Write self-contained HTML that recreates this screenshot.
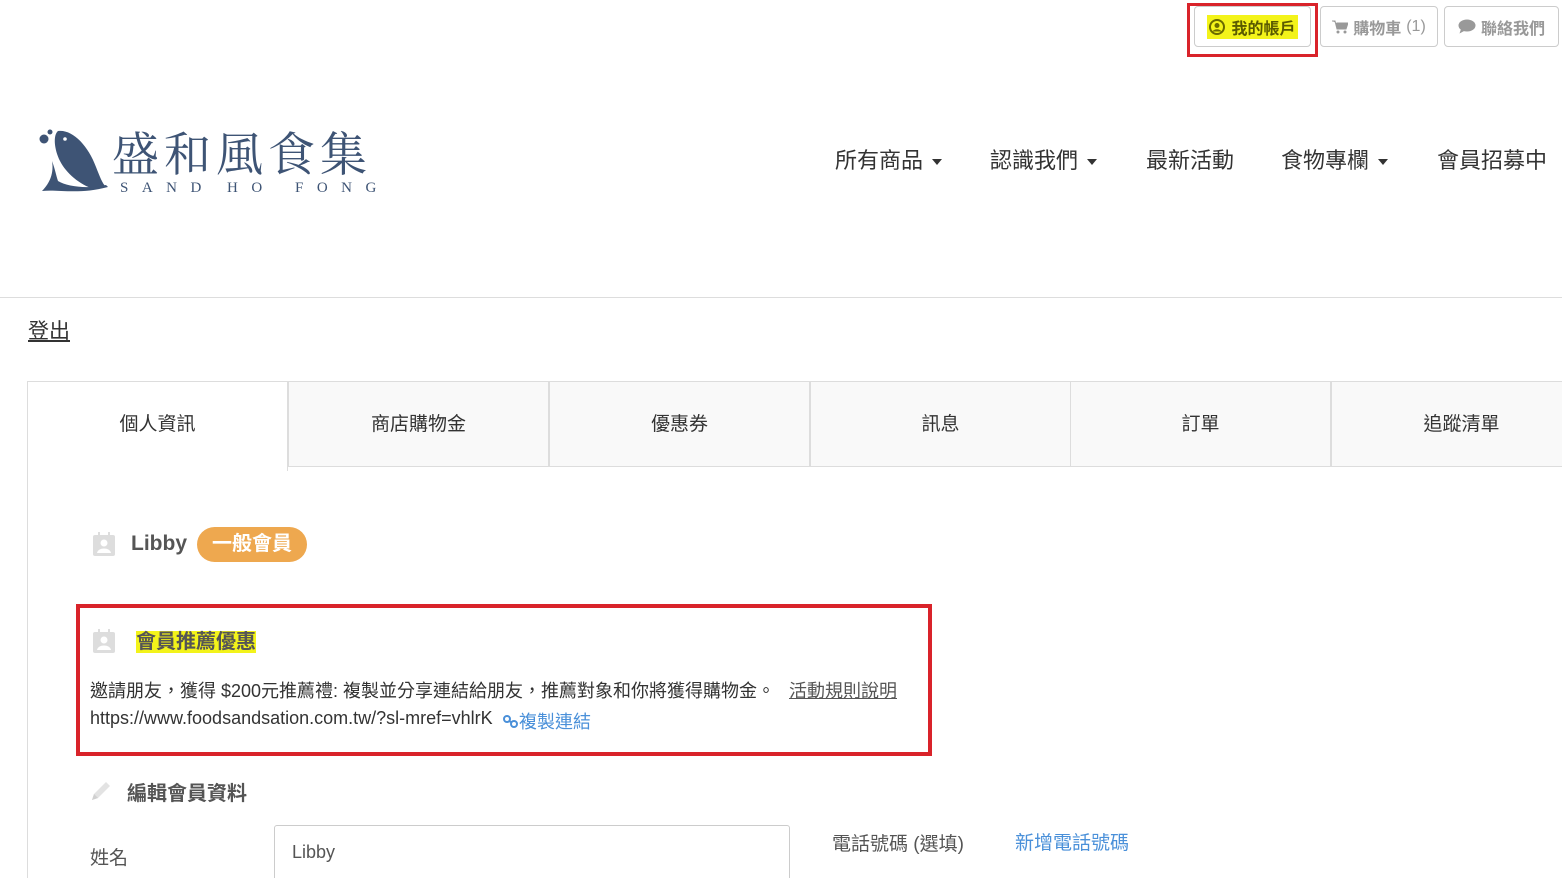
<!DOCTYPE html>
<html><head><meta charset="utf-8"><style>
*{box-sizing:border-box;margin:0;padding:0}
html,body{width:1562px;height:878px;overflow:hidden}
body{background:#fff;position:relative;font-family:"Liberation Sans","Noto Sans CJK TC",sans-serif;color:#333}
.a{position:absolute;white-space:nowrap}
.btn{position:absolute;top:6px;height:41px;border:1px solid #ccc;border-radius:4px;font-size:16px;color:#999;display:flex;align-items:center;justify-content:center;gap:5px;font-weight:bold}
.nav{position:absolute;top:143px;font-size:22px;color:#333}
.caret{display:inline-block;border-left:5px solid transparent;border-right:5px solid transparent;border-top:6px solid #333;vertical-align:middle;margin-left:9px}
.tab{position:absolute;top:381px;height:86px;width:261px;border:1px solid #ddd;background:#f9f9f9;font-size:19px;display:flex;align-items:center;justify-content:center;color:#333;padding-bottom:4px}
.hl{background:#f3f31a}
.sub{position:absolute;top:180px;font-family:'Liberation Serif',serif;font-size:15px;color:#3e5475;letter-spacing:13.5px}
</style></head><body>
<div class="btn" style="left:1194px;width:117px"><span style="color:#5a5a00;background:#f3f31a;padding:0 2px;display:flex;align-items:center;gap:6px"><svg width="16" height="16" viewBox="0 0 16 16"><circle cx="8" cy="8" r="7" fill="none" stroke="#6a6a00" stroke-width="2"/><circle cx="8" cy="6.5" r="2.5" fill="#6a6a00"/><path d="M3.5 12.5 C5 9.5 11 9.5 12.5 12.5" fill="#6a6a00"/></svg>我的帳戶</span></div>
<div style="position:absolute;left:1187px;top:3px;width:131px;height:54px;border:3px solid #d9232a"></div>
<div class="btn" style="left:1320px;width:118px"><svg width="16" height="14" viewBox="0 0 16 14"><path d="M0 1h3l2 8h9l2-6H4.5" fill="#999" stroke="#999" stroke-width="1"/><circle cx="6" cy="12" r="1.5" fill="#999"/><circle cx="13" cy="12" r="1.5" fill="#999"/></svg>購物車 <span style="font-weight:normal">(1)</span></div>
<div class="btn" style="left:1444px;width:115px"><svg width="18" height="15" viewBox="0 0 18 15"><ellipse cx="9" cy="6.5" rx="8.5" ry="6" fill="#999"/><path d="M3 10 L1.5 14.5 L7 11.5Z" fill="#999"/></svg>聯絡我們</div>

<svg class="a" style="left:38px;top:125px" width="72" height="72" viewBox="0 0 72 72">
<circle cx="6" cy="14" r="4.5" fill="#3e5475"/><circle cx="12" cy="7" r="2.5" fill="#3e5475"/>
<path d="M20 6 C34 4 50 20 58 42 C62 52 64 58 68 62 L56 64 C42 60 28 48 22 36 C16 24 15 10 20 6Z" fill="#3e5475"/>
<circle cx="27" cy="14" r="1.8" fill="#fff"/>
<path d="M14 36 C16 48 12 58 4 66 C20 64 40 70 70 62 L68 60 C50 64 30 62 20 56 C18 50 17 44 14 36Z" fill="#3e5475"/>
</svg>
<div class="a" style="left:112px;top:122px;font-family:'Noto Serif CJK SC',serif;font-size:47px;line-height:60px;color:#3e5475;letter-spacing:5px">盛和風食集</div>
<div class="sub" style="left:120px">SAND</div>
<div class="sub" style="left:227px">HO</div>
<div class="sub" style="left:295px">FONG</div>

<div class="nav" style="left:835px">所有商品<span class="caret"></span></div>
<div class="nav" style="left:990px">認識我們<span class="caret"></span></div>
<div class="nav" style="left:1146px">最新活動</div>
<div class="nav" style="left:1281px">食物專欄<span class="caret"></span></div>
<div class="nav" style="left:1437px">會員招募中</div>

<div class="a" style="left:0;top:297px;width:1562px;border-top:1px solid #ddd"></div>
<div class="a" style="left:28px;top:315px;font-size:21px;text-decoration:underline;color:#333">登出</div>

<div style="position:absolute;left:27px;top:381px;width:1540px;height:520px;border:1px solid #ddd"></div>
<div class="tab" style="left:27px;background:#fff;border-bottom:none;height:90px;padding-bottom:8px">個人資訊</div>
<div class="tab" style="left:288px">商店購物金</div>
<div class="tab" style="left:549px">優惠券</div>
<div class="tab" style="left:810px">訊息</div>
<div class="tab" style="left:1070px">訂單</div>
<div class="tab" style="left:1331px;width:261px">追蹤清單</div>

<svg class="a" style="left:93px;top:532px" width="22" height="24" viewBox="0 0 22 24"><rect x="0" y="3" width="22" height="21" rx="2" fill="#ddd"/><rect x="5" y="0" width="2" height="5" fill="#ddd"/><rect x="15" y="0" width="2" height="5" fill="#ddd"/><circle cx="11" cy="11" r="3.5" fill="#fff"/><path d="M4 21 C5 15 17 15 18 21Z" fill="#fff"/></svg>
<div class="a" style="left:131px;top:532px;font-size:21px;font-weight:bold;color:#555">Libby</div>
<div class="a" style="left:197px;top:527px;width:110px;height:35px;border-radius:18px;background:#eea84f;color:#fff;font-weight:bold;font-size:20px;text-align:center;line-height:34px">一般會員</div>

<div style="position:absolute;left:76px;top:604px;width:856px;height:152px;border:4px solid #d9232a"></div>
<svg class="a" style="left:93px;top:629px" width="22" height="24" viewBox="0 0 22 24"><rect x="0" y="3" width="22" height="21" rx="2" fill="#ddd"/><rect x="5" y="0" width="2" height="5" fill="#ddd"/><rect x="15" y="0" width="2" height="5" fill="#ddd"/><circle cx="11" cy="11" r="3.5" fill="#fff"/><path d="M4 21 C5 15 17 15 18 21Z" fill="#fff"/></svg>
<div class="a" style="left:136px;top:625px;font-size:20px;font-weight:bold;color:#555"><span class="hl">會員推薦優惠</span></div>
<div class="a" style="left:90px;top:677px;font-size:18px;color:#333">邀請朋友，獲得 $200元推薦禮: 複製並分享連結給朋友，推薦對象和你將獲得購物金。</div>
<div class="a" style="left:789px;top:677px;font-size:18px;color:#555;text-decoration:underline">活動規則說明</div>
<div class="a" style="left:90px;top:708px;font-size:18px;color:#333">https://www.foodsandsation.com.tw/?sl-mref=vhlrK</div>
<div class="a" style="left:503px;top:708px;font-size:18px;color:#4a90d9"><svg width="16" height="14" viewBox="0 0 16 14" style="vertical-align:-1px"><circle cx="4" cy="4" r="3" fill="none" stroke="#4a90d9" stroke-width="2"/><circle cx="11" cy="9" r="3" fill="none" stroke="#4a90d9" stroke-width="2"/><path d="M6 6l3 1.5" stroke="#4a90d9" stroke-width="2"/></svg>複製連結</div>

<svg class="a" style="left:89px;top:779px" width="24" height="24" viewBox="0 0 24 24"><path d="M3 21 L5 15 L17 3 L21 7 L9 19Z" fill="#e3e3e3"/><path d="M3 21 L5 15 L9 19Z" fill="#d0d0d0"/></svg>
<div class="a" style="left:127px;top:777px;font-size:20px;font-weight:bold;color:#555">編輯會員資料</div>

<div class="a" style="left:90px;top:843px;font-size:19px;color:#555">姓名</div>
<div style="position:absolute;left:274px;top:825px;width:516px;height:60px;border:1px solid #ccc;border-radius:3px"></div>
<div class="a" style="left:292px;top:842px;font-size:18px;color:#555">Libby</div>
<div class="a" style="left:832px;top:829px;font-size:19px;color:#555">電話號碼 (選填)</div>
<div class="a" style="left:1015px;top:828px;font-size:19px;color:#4a90d9">新增電話號碼</div>
</body></html>
